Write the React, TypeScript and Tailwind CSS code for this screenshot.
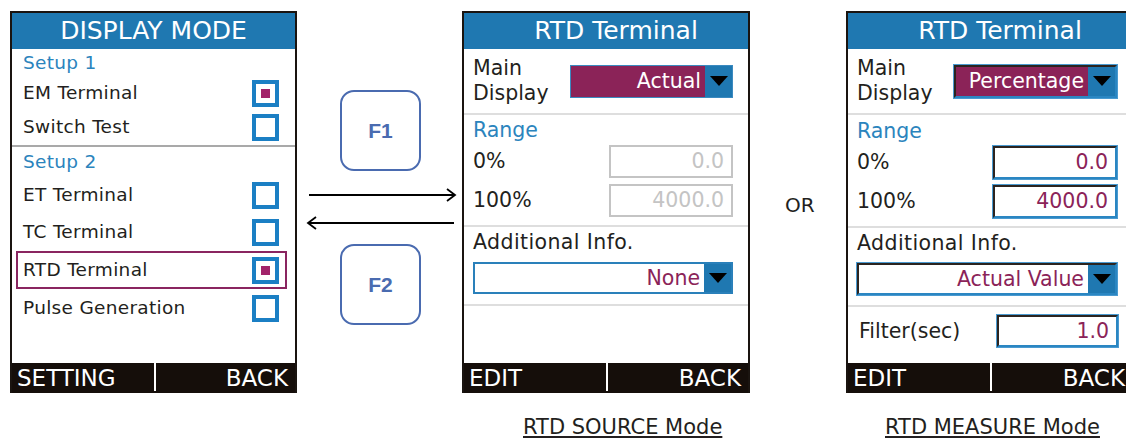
import React from "react";

const Checkbox = ({ checked }: { checked?: boolean }) => (
  <div className="w-[27px] h-[27px] border-[4px] border-[#1b7fc4] bg-white flex items-center justify-center">
    {checked && <div className="w-[9px] h-[9px] bg-[#a2236a]" />}
  </div>
);

const Triangle = () => (
  <div className="w-[27px] self-stretch bg-[#1f78b1] flex items-center justify-center">
    <svg width="18" height="10" viewBox="0 0 18 10">
      <path d="M0 0H18L9 10Z" fill="#000" />
    </svg>
  </div>
);

const Select = ({
  value,
  filled,
  sunken,
  thick,
}: {
  value: string;
  filled?: boolean;
  sunken?: boolean;
  thick?: boolean;
}) => {
  const frame = sunken
    ? "border-2 border-t-[#2b2420] border-l-[#2b2420] border-r-[#2a86c2] border-b-[#2a86c2] shadow-[0_0_0_1px_#4a9ad0]"
    : thick
    ? "border-2 border-[#2a80ba]"
    : "border border-[#3b8ac0]";
  return (
    <div className={`flex h-full ${frame}`}>
      <div
        className={`flex-1 flex items-center justify-end pr-[4px] text-[20.5px] ${
          filled ? "bg-[#8b2358] text-white" : "bg-white text-[#8b2358]"
        }`}
      >
        {value}
      </div>
      <Triangle />
    </div>
  );
};

const Field = ({ value, active }: { value: string; active?: boolean }) => (
  <div
    className={`h-full flex items-center justify-end pr-[7px] text-[20.5px] ${
      active
        ? "border-2 border-t-[#2b2420] border-l-[#2b2420] border-r-[#2a86c2] border-b-[#2a86c2] shadow-[0_0_0_1px_#4a9ad0] text-[#8b2358]"
        : "border-2 border-[#c4c4c4] text-[#c4c4c4]"
    }`}
  >
    {value}
  </div>
);

const Footer = ({ left }: { left: string }) => (
  <div className="h-[30px] bg-[#150e0a] text-white text-[23px] flex">
    <div className="w-[142px] flex items-center pl-[5px] leading-none">{left}</div>
    <div className="w-[2px] bg-white mb-[2px]" />
    <div className="flex-1 flex items-center justify-end pr-[7px] leading-none">BACK</div>
  </div>
);

const items = [
  { label: "EM Terminal", checked: true, h: "h-[32px]" },
  { label: "Switch Test", h: "h-[36px]" },
];
const items2 = [
  { label: "ET Terminal", h: "h-[36px]" },
  { label: "TC Terminal", h: "h-[38px]" },
  { label: "RTD Terminal", checked: true, h: "h-[38px]", selected: true },
  { label: "Pulse Generation", h: "h-[38px]" },
];

const Row = ({ label, checked, h, selected }: { label: string; checked?: boolean; h: string; selected?: boolean }) => (
  <div
    className={`${h} ml-[4px] mr-[8px] border-2 ${
      selected ? "border-[#8a2560]" : "border-transparent"
    } pl-[5px] pr-[6px] flex items-center justify-between`}
  >
    <span>{label}</span>
    <Checkbox checked={checked} />
  </div>
);

const DisplayMode = () => (
  <div className="w-[287px] h-[382px] shrink-0 border-x-2 border-t-2 border-[#1a1410] flex flex-col">
    <div className="h-[36px] bg-[#1f78b1] text-white text-[25px] flex items-center justify-center">
      DISPLAY MODE
    </div>
    <div className="flex-1 bg-white text-[18.5px] tracking-[0.3px] flex flex-col">
      <div className="h-[28px] pl-[11px] flex items-center text-[#2b84bd]">Setup 1</div>
      {items.map((it) => (
        <Row key={it.label} {...it} />
      ))}
      <div className="h-[2px] bg-[#a9a9a9]" />
      <div className="h-[30px] pl-[11px] flex items-center text-[#2b84bd]">Setup 2</div>
      {items2.map((it) => (
        <Row key={it.label} {...it} />
      ))}
    </div>
    <Footer left="SETTING" />
  </div>
);

const Arrow = ({ dir }: { dir: "left" | "right" }) => (
  <svg width="150" height="14" viewBox="0 0 150 14" className={dir === "right" ? "ml-[12px]" : "ml-[9px]"}>
    {dir === "right" ? (
      <>
        <line x1="0" y1="7" x2="146" y2="7" stroke="#000" strokeWidth="1.8" />
        <polyline points="138,1 146,7 138,13" fill="none" stroke="#000" strokeWidth="1.8" />
      </>
    ) : (
      <>
        <line x1="2" y1="7" x2="148" y2="7" stroke="#000" strokeWidth="1.8" />
        <polyline points="10,1 2,7 10,13" fill="none" stroke="#000" strokeWidth="1.8" />
      </>
    )}
  </svg>
);

const Key = ({ label }: { label: string }) => (
  <div className="w-[81px] h-[81px] ml-[43px] rounded-[14px] border-[2.5px] border-[#4a6bb0] flex items-center justify-center font-['Liberation_Sans',sans-serif] font-bold text-[21px] text-[#4a6bb0]">
    {label}
  </div>
);

const Keys = () => (
  <div className="w-[165px] shrink-0 flex flex-col pt-[79px]">
    <Key label="F1" />
    <div className="mt-[17px]">
      <Arrow dir="right" />
    </div>
    <div className="mt-[14px]">
      <Arrow dir="left" />
    </div>
    <div className="mt-[14px]">
      <Key label="F2" />
    </div>
  </div>
);

const RtdScreen = ({ measure }: { measure?: boolean }) => (
  <div className="w-[288px] h-[382px] shrink-0 border-x-2 border-t-2 border-[#1a1410] flex flex-col">
    <div className="h-[36px] bg-[#1f78b1] text-white text-[25px] flex items-center justify-center pl-[20px]">
      RTD Terminal
    </div>
    <div className="flex-1 bg-white text-[20.5px] flex flex-col">
      <div className="h-[64px] flex items-center justify-between pl-[9px] pr-[15px]">
        <div className="leading-[25px]">
          Main
          <br />
          Display
        </div>
        <div className="w-[163px] h-[33px]">
          <Select value={measure ? "Percentage" : "Actual"} filled sunken={measure} />
        </div>
      </div>
      <div className="h-[2px] bg-[#dedede]" />
      <div className={`flex flex-col pl-[9px] pr-[15px] pb-[8px] ${measure ? "pt-[4px]" : "pt-[3px]"}`}>
        <div className="leading-[24px] text-[#2b84bd]">Range</div>
        <div className="h-[33px] mt-[3px] flex items-center justify-between">
          <span>0%</span>
          <div className="w-[124px] h-full">
            <Field value="0.0" active={measure} />
          </div>
        </div>
        <div className="h-[33px] mt-[6px] flex items-center justify-between">
          <span>100%</span>
          <div className="w-[124px] h-full">
            <Field value="4000.0" active={measure} />
          </div>
        </div>
      </div>
      <div className="h-[2px] bg-[#dedede]" />
      <div className="flex flex-col pl-[9px] pr-[15px] pt-[3px] pb-[10px]">
        <div className="leading-[24px] tracking-[0.4px]">Additional Info.</div>
        <div className="h-[32px] mt-[8px]">
          <Select value={measure ? "Actual Value" : "None"} thick={!measure} sunken={measure} />
        </div>
      </div>
      <div className="h-[2px] bg-[#dedede]" />
      {measure && (
        <div className="h-[32px] mt-[8px] pl-[11px] pr-[14px] flex items-center justify-between">
          <span>Filter(sec)</span>
          <div className="w-[121px] h-full">
            <Field value="1.0" active />
          </div>
        </div>
      )}
    </div>
    <Footer left="EDIT" />
  </div>
);

const Caption = ({ text, pl }: { text: string; pl: string }) => (
  <div
    className={`mt-[22px] ${pl} text-[21px] leading-[24px] text-[#231f20] underline decoration-[1.5px] underline-offset-[2px]`}
  >
    {text}
  </div>
);

export default function App() {
  return (
    <div className="w-[1126px] h-[439px] overflow-hidden bg-white font-['DejaVu_Sans',sans-serif] text-[#231f20]">
      <div className="flex pt-[11px] pl-[10px]">
        <DisplayMode />
        <Keys />
        <div className="flex flex-col shrink-0">
          <RtdScreen />
          <Caption text="RTD SOURCE Mode" pl="pl-[61px]" />
        </div>
        <div className="w-[96px] shrink-0 pt-[182px] pl-[35px] text-[20px] leading-[24px]">OR</div>
        <div className="flex flex-col shrink-0">
          <RtdScreen measure />
          <Caption text="RTD MEASURE Mode" pl="pl-[39px]" />
        </div>
      </div>
    </div>
  );
}
